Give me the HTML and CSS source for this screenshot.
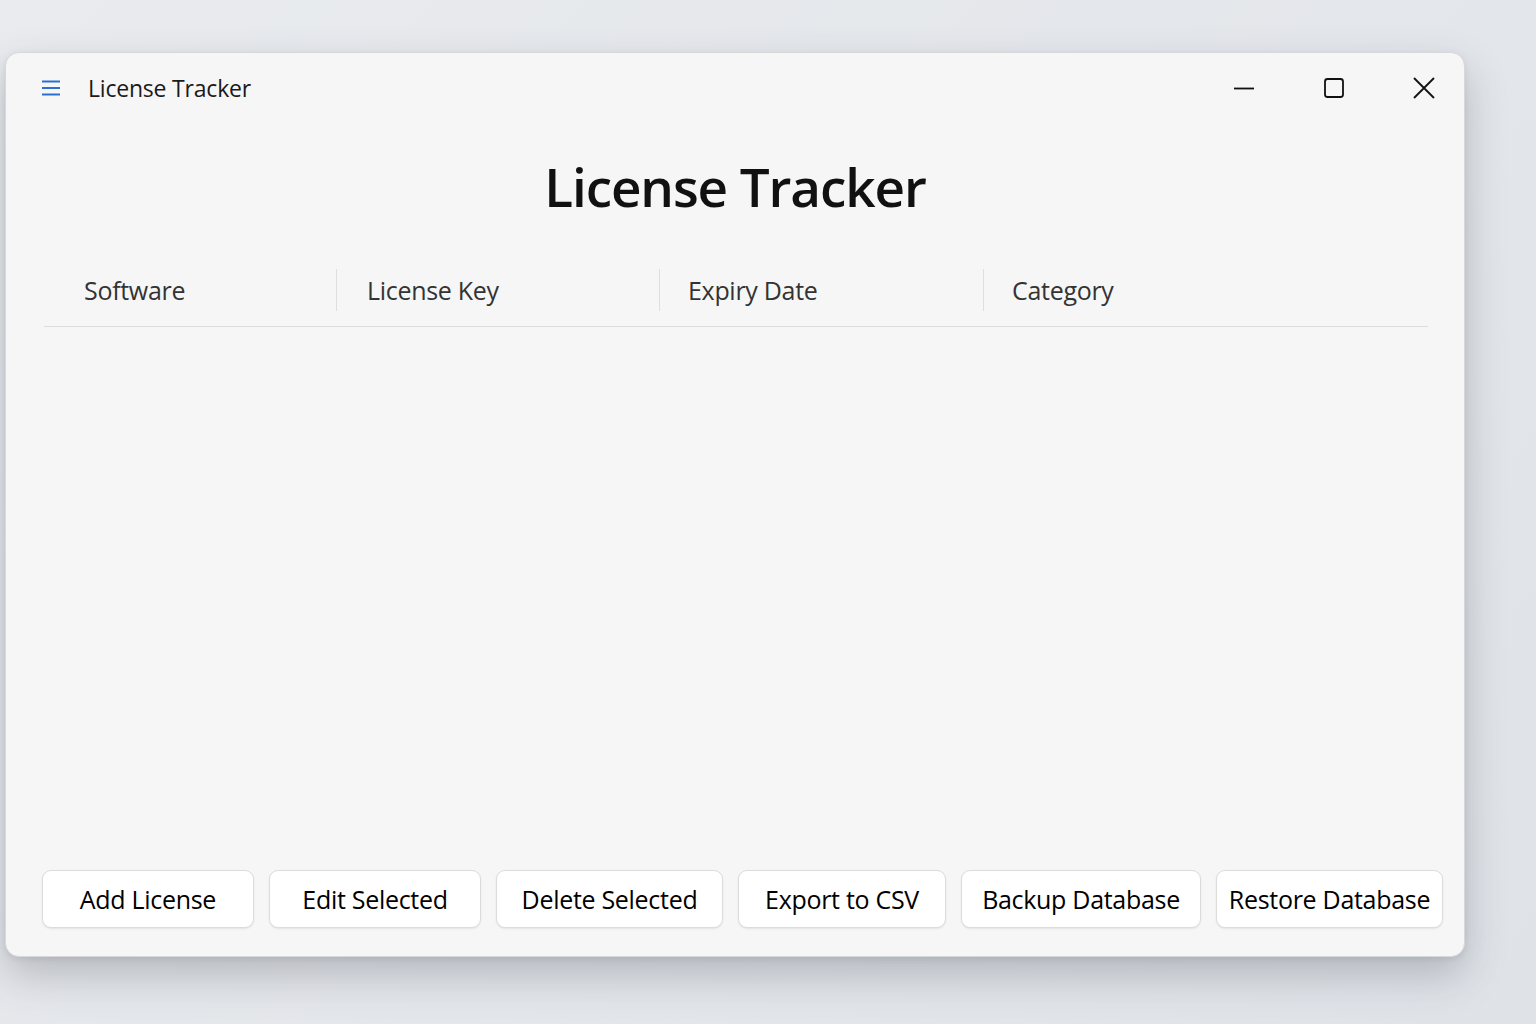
FILE: index.html
```html
<!DOCTYPE html>
<html lang="en">
<head>
<meta charset="utf-8">
<title>License Tracker</title>
<link rel="stylesheet" href="styles.css">
</head>
<body>
<div class="window">
  <header class="titlebar">
    <div class="titlebar-left">
      <svg class="menu-icon" width="20" height="16" viewBox="0 0 20 16"><path d="M1 1.5h18M1 8h18M1 14.5h18" stroke="#2b6fd1" stroke-width="2" fill="none"/></svg>
      <span class="app-name">License Tracker</span>
    </div>
    <div class="controls">
      <span class="ctl"><svg width="22" height="22" viewBox="0 0 22 22"><path d="M1 11.5h20" stroke="#111" stroke-width="1.8"/></svg></span>
      <span class="ctl"><svg width="22" height="22" viewBox="0 0 22 22"><rect x="2" y="2" width="18" height="18" rx="2.5" stroke="#111" stroke-width="1.8" fill="none"/></svg></span>
      <span class="ctl"><svg width="24" height="24" viewBox="0 0 24 24"><path d="M2 2L22 22M22 2L2 22" stroke="#111" stroke-width="1.8" fill="none"/></svg></span>
    </div>
  </header>
  <h1 class="heading">License Tracker</h1>
  <div class="table">
    <div class="thead">
      <div class="th col-software">Software</div>
      <div class="th col-key">License Key</div>
      <div class="th col-expiry">Expiry Date</div>
      <div class="th col-category">Category</div>
    </div>
    <div class="tbody"></div>
  </div>
  <div class="actions">
    <button class="btn btn-add">Add License</button>
    <button class="btn btn-edit">Edit Selected</button>
    <button class="btn btn-delete">Delete Selected</button>
    <button class="btn btn-export">Export to CSV</button>
    <button class="btn btn-backup">Backup Database</button>
    <button class="btn btn-restore">Restore Database</button>
  </div>
</div>
</body>
</html>
```
FILE: styles.css
```css
* { box-sizing: border-box; }
html, body { height: 100%; }
body {
  margin: 0;
  padding: 52px 0 0 5px;
  background: linear-gradient(135deg, #e9ebee 0%, #e3e6ea 60%, #dfe3e8 100%);
  font-family: "Open Sans", "Noto Sans", sans-serif;
  overflow: hidden;
}
.window {
  width: 1460px;
  height: 905px;
  background: #f6f6f6;
  border: 1px solid #d6d8db;
  border-radius: 14px;
  box-shadow: 0 18px 40px rgba(60, 66, 80, 0.28), 0 2px 6px rgba(0,0,0,0.08);
  display: flex;
  flex-direction: column;
}
.titlebar {
  height: 70px;
  display: flex;
  align-items: center;
  justify-content: space-between;
  padding: 0 28px 0 35px;
}
.titlebar-left { display: flex; align-items: center; gap: 27px; }
.menu-icon { display: block; }
.app-name { font-size: 23px; color: #1a1a1a; letter-spacing: -0.2px; }
.controls { display: flex; align-items: center; gap: 66px; }
.ctl { display: flex; width: 24px; height: 24px; align-items: center; justify-content: center; }
.ctl svg { display: block; }
.heading {
  margin: 24px 0 0 0;
  text-align: center;
  font-size: 53px;
  font-weight: 600;
  color: #111;
  line-height: 80px;
  letter-spacing: -1.1px;
}
.table {
  flex: 1;
  margin: 26px 36px 0 38px;
  display: flex;
  flex-direction: column;
}
.thead {
  display: flex;
  height: 74px;
  border-bottom: 1px solid #dcdcdc;
  align-items: center;
}
.th {
  height: 42px;
  display: flex;
  align-items: center;
  font-size: 25px;
  color: #333;
  letter-spacing: -0.3px;
}
.th + .th { border-left: 1px solid #dedede; }
.col-software { width: 292px; padding-left: 40px; }
.col-key { width: 323px; padding-left: 30px; }
.col-expiry { width: 324px; padding-left: 28px; }
.col-category { flex: 1; padding-left: 28px; }
.tbody { flex: 1; }
.actions {
  display: flex;
  gap: 15px;
  padding: 0 0 28px 36px;
}
.btn {
  height: 58px;
  background: #fff;
  border: 1px solid #dcdcdc;
  border-radius: 9px;
  box-shadow: 0 1px 2px rgba(0,0,0,0.08);
  font-family: inherit;
  font-size: 25px;
  font-weight: 500;
  color: #000;
  letter-spacing: -0.3px;
  padding: 0;
  flex-shrink: 0;
}
.btn-add { width: 212px; }
.btn-edit { width: 212px; }
.btn-delete { width: 227px; }
.btn-export { width: 208px; }
.btn-backup { width: 240px; }
.btn-restore { width: 227px; }
```
